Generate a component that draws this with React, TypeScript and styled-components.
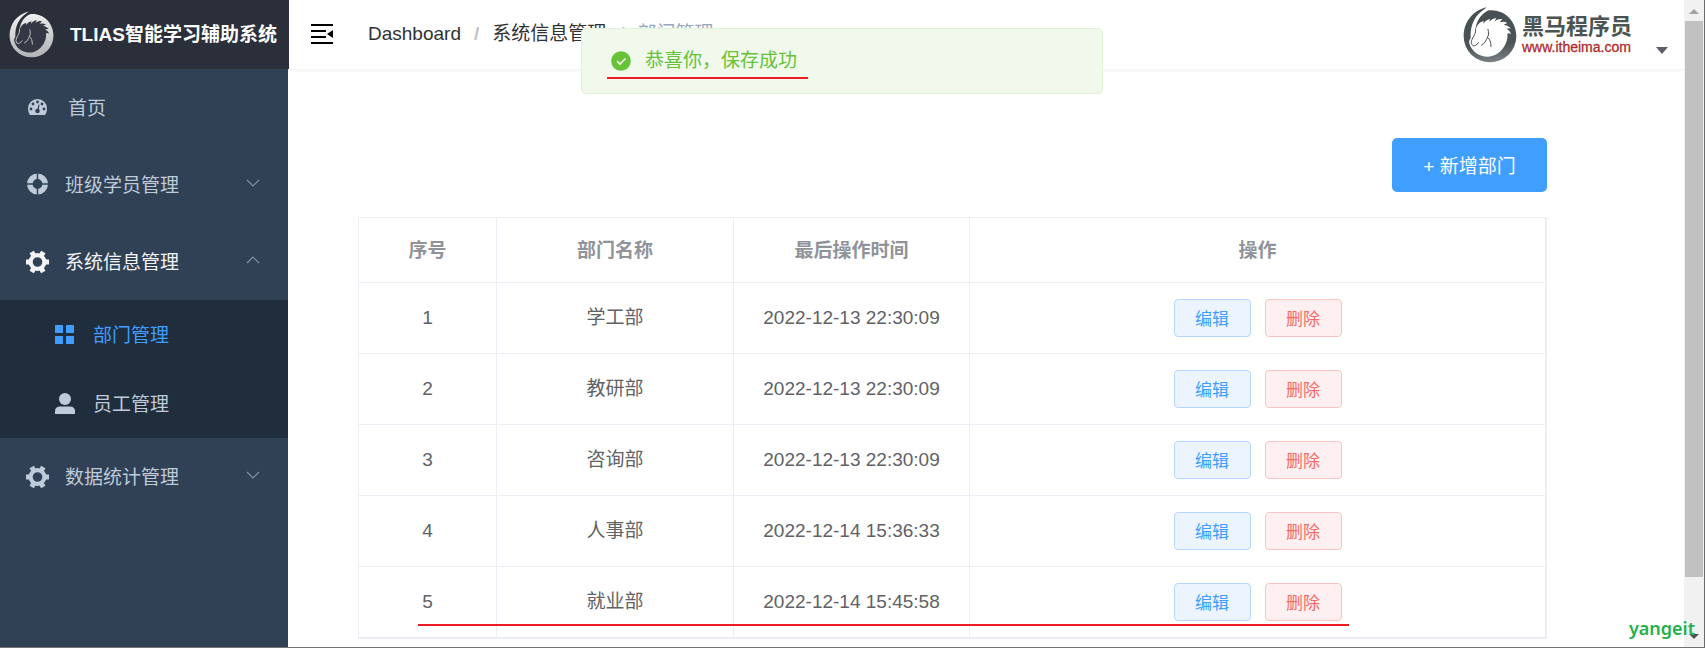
import React from "react";
import styled, { createGlobalStyle } from "styled-components";

const GlobalStyle = createGlobalStyle`
  * { box-sizing: border-box; }
  body {
    margin: 0;
    background: #fff;
    color: #303133;
    font-family: "Liberation Sans", "Noto Sans CJK SC", sans-serif;
    font-size: 19px;
    line-height: 24px;
  }
  a { color: inherit; text-decoration: none; }
  button { font-family: inherit; cursor: pointer; }
`;

const Window = styled.div`
  display: flex;
  min-height: 100vh;
  border-right: 1px solid #6b6b6b;
  border-bottom: 1px solid #737373;
`;

const Page = styled.div`
  position: relative;
  flex: 1;
  min-width: 0;
  display: flex;
  flex-direction: column;
`;

const Header = styled.header`
  display: flex;
  height: 69px;
`;

const Brand = styled.h1`
  display: flex;
  align-items: center;
  gap: 16px;
  width: 289px;
  margin: 0;
  padding-left: 9px;
  background: #2b2f3a;
  color: #fff;
  font-size: 19px;
  line-height: 24px;
  font-weight: 700;
  white-space: nowrap;
`;

const TopBar = styled.div`
  flex: 1;
  display: flex;
  align-items: center;
  padding: 0 16px 0 21px;
  box-shadow: 0 1px 4px rgba(0, 21, 41, 0.08);
  clip-path: inset(0 0 -8px 0);
`;

const IconButton = styled.button`
  display: flex;
  padding: 0 0 2px;
  border: 0;
  background: none;
`;

const Crumbs = styled.ol`
  display: flex;
  flex: 1;
  gap: 13px;
  margin: 0 0 2px 34px;
  padding: 0;
  list-style: none;
`;

const Crumb = styled.li<{ $current?: boolean }>`
  display: flex;
  gap: 13px;
  color: ${(p) => (p.$current ? "#97a8be" : "#303133")};
  white-space: nowrap;
`;

const Slash = styled.span`
  color: #c0c4cc;
  font-weight: 700;
`;

const Account = styled.button`
  display: flex;
  align-items: flex-end;
  gap: 24px;
  padding: 0;
  border: 0;
  background: none;
`;

const Company = styled.span`
  display: flex;
  align-items: center;
  gap: 5px;
`;

const CompanyText = styled.span`
  display: flex;
  flex-direction: column;
  text-align: left;
`;

const CompanyName = styled.span`
  color: #4b5452;
  font-size: 22px;
  line-height: 24px;
  font-weight: 700;
`;

const CompanySite = styled.span`
  color: #b02a2c;
  font-size: 14px;
  line-height: 16px;
  -webkit-text-stroke: 0.3px #b02a2c;
`;

const Caret = styled.span`
  margin-bottom: 9px;
  border: 6px solid transparent;
  border-top: 7px solid #5a5e66;
  border-bottom: 0;
`;

const Body = styled.div`
  flex: 1;
  display: flex;
`;

const Sidebar = styled.nav`
  width: 288px;
  background: #304156;
  color: #bfcbd9;
`;

const MenuList = styled.ul`
  margin: 0;
  padding: 0;
  list-style: none;
`;

const SubMenu = styled(MenuList)`
  background: #1f2d3d;
`;

const MenuLink = styled.a<{ $nested?: boolean; $wide?: boolean; $tone?: string }>`
  display: flex;
  align-items: center;
  gap: ${(p) => (p.$wide ? 19 : 16)}px;
  height: ${(p) => (p.$nested ? 69 : 77)}px;
  padding: 0 28px 0 ${(p) => (p.$nested ? 53 : 25)}px;
  color: ${(p) => p.$tone || "inherit"};
`;

const MenuText = styled.span`
  flex: 1;
  padding-top: 3px;
`;

const Main = styled.main`
  flex: 1;
  min-width: 0;
  padding: 69px 137px 8px 70px;
`;

const Actions = styled.div`
  display: flex;
  justify-content: flex-end;
  margin-bottom: 25px;
`;

const AddButton = styled.button`
  width: 155px;
  height: 54px;
  padding: 0 0 2px;
  border: 0;
  border-radius: 5px;
  background: #409eff;
  color: #fff;
  font-size: 19px;
`;

const TableFrame = styled.div`
  position: relative;
  border: 1px solid #ebeef5;
  border-width: 1px 2px 2px 1px;
`;

const Table = styled.table`
  width: 100%;
  table-layout: fixed;
  border-collapse: separate;
  border-spacing: 0;
  text-align: center;
`;

const Col = styled.col<{ $width?: string }>`
  width: ${(p) => p.$width || "auto"};
`;

const Th = styled.th`
  height: 65px;
  padding: 2px 0 0;
  border-bottom: 1px solid #ebeef5;
  color: #909399;
  font-weight: 700;
  & + & { border-left: 1px solid #ebeef5; }
`;

const Td = styled.td`
  height: 71px;
  padding: 0;
  border-bottom: 1px solid #ebeef5;
  color: #606266;
  & + & { border-left: 1px solid #ebeef5; }
  tr:last-child > & {
    height: 70px;
    border-bottom: 0;
  }
`;

const RowActions = styled.div`
  display: flex;
  justify-content: center;
  gap: 14px;
`;

const RowButton = styled.button<{ $danger?: boolean }>`
  width: 77px;
  height: 38px;
  padding: 0 0 2px;
  border: 1px solid ${(p) => (p.$danger ? "#fbc4c4" : "#b3d8ff")};
  border-radius: 4px;
  background: ${(p) => (p.$danger ? "#fef0f0" : "#ecf5ff")};
  color: ${(p) => (p.$danger ? "#f56c6c" : "#409eff")};
  font-size: 17px;
`;

const RowUnderline = styled.span`
  position: absolute;
  left: 59px;
  right: 196px;
  bottom: 11px;
  height: 2px;
  background: #ed1c24;
`;

const Toast = styled.div`
  position: absolute;
  top: 28px;
  left: 0;
  right: 0;
  z-index: 2;
  display: flex;
  align-items: center;
  gap: 13px;
  width: 522px;
  height: 66px;
  margin: 0 auto;
  padding: 0 28px;
  border: 1px solid #e1f3d8;
  border-radius: 5px;
  background: #f0f9eb;
  color: #67c23a;
`;

const ToastUnderline = styled.span`
  position: absolute;
  left: 25px;
  top: 48px;
  width: 201px;
  height: 2px;
  background: #ed1c24;
`;

const ScrollTrack = styled.div`
  display: flex;
  flex-direction: column;
  align-items: center;
  width: 20px;
  background: #f1f1f1;
`;

const ScrollThumb = styled.div`
  flex: 556;
  width: 18px;
  background: #c1c1c1;
`;

const ScrollRest = styled.div`
  flex: 49;
`;

const ScrollEnd = styled.div`
  display: flex;
  align-items: center;
  justify-content: center;
  height: 21px;
`;

const Watermark = styled.span`
  position: absolute;
  right: 10px;
  bottom: 8px;
  z-index: 3;
  color: #22b14c;
  font-family: "Noto Sans", sans-serif;
  font-size: 18px;
  line-height: 24px;
  font-weight: 600;
`;

const Root = styled.div`
  position: relative;
`;

function HorseLogo({ size, light }: { size: number; light?: boolean }) {
  const id = light ? "ring-light" : "ring-dark";
  const inner = light ? "#343844" : "#ffffff";
  const gap = light ? "#2b2f3a" : "#ffffff";
  return (
    <svg width={size} height={size + 2} viewBox="0 0 162 168" aria-hidden="true">
      <defs>
        <linearGradient id={id} x1="0.4" y1="0" x2="0.5" y2="1">
          <stop offset="0" stopColor={light ? "#f4f4f4" : "#465050"} />
          <stop offset="0.7" stopColor={light ? "#c4c5c6" : "#4c5557"} />
          <stop offset="1" stopColor={light ? "#b2b3b5" : "#7a8083"} />
        </linearGradient>
      </defs>
      <path
        fill={`url(#${id})`}
        d="M70 1C28 12 2 46 2 88a79 78 0 0 0 158 0C160 44 127 10 85 10c-8 0-18 2-25 5Z"
      />
      <path fill={gap} d="M70 3C43 18 25 44 23 78c-1 13 1 25 5 36l8-8c-2-24 0-49 11-69C53 26 62 18 74 11Z" />
      <path
        fill={inner}
        d="M38 68c4-15 13-23 24-26l-1 8c5-8 12-12 20-14l-2 9c6-8 13-11 21-12l-5 10c8-6 15-8 23-7l-8 10c9-3 16-2 23 2l-11 5c9 1 16 5 21 11l-13 1c7 4 12 9 14 16-7-3-8-3-11 0 4 28-22 68-59 68-29 0-51-19-56-44 2-13 15-23 20-37Z"
      />
      <g fill="none" stroke={light ? "#d8d9db" : "#4b5456"} strokeWidth="3" strokeLinecap="round">
        <path d="M38 68c2 15-13 25-13 38 0 8 6 13 13 9l9-8" />
        <path d="M75 67c3 11 2 18-2 25-4 8-8 19-17 22" />
        <path d="M73 91c8 4 11 15 11 28" />
      </g>
    </svg>
  );
}

function FoldIcon() {
  return (
    <svg width="24" height="20" viewBox="0 0 24 20" aria-hidden="true">
      <path d="M1 1h22M1 7h15M1 13h15M1 19h22" stroke="#000" strokeWidth="2" />
      <path d="M23 6v8l-6-4z" />
    </svg>
  );
}

function DashboardIcon() {
  return (
    <svg width="24" height="22" viewBox="0 0 24 22" aria-hidden="true">
      <path fill="#bfcbd9" d="M5 18c-1-1.500-2-4-2-6.500a9.500 9.500 0 0 1 19 0c0 2.500-1 5-2 6.500Z" />
      <g fill="#304156">
        <circle cx="12.500" cy="5" r="1.400" />
        <circle cx="8" cy="7" r="1.400" />
        <circle cx="17" cy="7" r="1.400" />
        <circle cx="6" cy="12" r="1.400" />
        <circle cx="19" cy="12" r="1.400" />
        <circle cx="12.500" cy="14" r="2.300" />
        <path d="m13.500 7.500 1 .3-1 6.200-1.500-.2Z" />
      </g>
    </svg>
  );
}

function HelpIcon() {
  return (
    <svg width="24" height="26" viewBox="0 0 24 26" aria-hidden="true">
      <circle cx="12.500" cy="12" r="7.700" fill="none" stroke="#bfcbd9" strokeWidth="5.600" />
      <path d="M12.500 0v24M0 12h24" stroke="#304156" strokeWidth="1.400" />
    </svg>
  );
}

function GearIcon() {
  return (
    <svg width="24" height="24" viewBox="0 0 24 24" aria-hidden="true">
      <g fill="none" stroke="currentColor">
        <circle cx="12.500" cy="12" r="6.900" strokeWidth="4.200" />
        <path
          strokeWidth="5"
          d="M1 12h4M20 12h4M6.700 2l2 3.500M18.300 2l-2 3.500M6.700 22l2-3.500M18.300 22l-2-3.500"
        />
      </g>
    </svg>
  );
}

function GridIcon() {
  return (
    <svg width="24" height="24" viewBox="0 0 24 24" fill="currentColor" aria-hidden="true">
      <rect x="2" y="2" width="8" height="8" rx="0.500" />
      <rect x="13" y="2" width="8" height="8" rx="0.500" />
      <rect x="2" y="13" width="8" height="8" rx="0.500" />
      <rect x="13" y="13" width="8" height="8" rx="0.500" />
    </svg>
  );
}

function UserIcon() {
  return (
    <svg width="24" height="24" viewBox="0 0 24 24" fill="currentColor" aria-hidden="true">
      <circle cx="12" cy="7" r="6" />
      <path d="M2 22v-3c0-3 2-4.500 5-4.500h10c3 0 5 1.500 5 4.500v3Z" />
    </svg>
  );
}

function Chevron({ up }: { up?: boolean }) {
  return (
    <svg width="14" height="14" viewBox="0 0 14 14" aria-hidden="true">
      <path d={up ? "M1 8l6-6 6 6" : "M1 2l6 6 6-6"} fill="none" stroke="#8790a0" strokeWidth="1.100" />
    </svg>
  );
}

function SuccessIcon() {
  return (
    <svg width="22" height="22" viewBox="0 0 22 22" aria-hidden="true">
      <circle cx="11" cy="11" r="9.800" fill="#67c23a" />
      <path d="m7 11.200 3 2.800 5.500-5.500" fill="none" stroke="#f0f9eb" strokeWidth="1.700" />
    </svg>
  );
}

const rows = [
  { id: 1, name: "学工部", time: "2022-12-13 22:30:09" },
  { id: 2, name: "教研部", time: "2022-12-13 22:30:09" },
  { id: 3, name: "咨询部", time: "2022-12-13 22:30:09" },
  { id: 4, name: "人事部", time: "2022-12-14 15:36:33" },
  { id: 5, name: "就业部", time: "2022-12-14 15:45:58" },
];

export default function App() {
  return (
    <Root>
      <GlobalStyle />
      <Window>
        <Page>
          <Header>
            <Brand>
              <HorseLogo size={45} light />
              TLIAS智能学习辅助系统
            </Brand>
            <TopBar>
              <IconButton type="button" aria-label="折叠菜单">
                <FoldIcon />
              </IconButton>
              <Crumbs>
                <Crumb>
                  <a href="#dashboard">Dashboard</a>
                  <Slash>/</Slash>
                </Crumb>
                <Crumb>
                  <a href="#system">系统信息管理</a>
                  <Slash>/</Slash>
                </Crumb>
                <Crumb $current>部门管理</Crumb>
              </Crumbs>
              <Account type="button">
                <Company>
                  <HorseLogo size={54} />
                  <CompanyText>
                    <CompanyName>黑马程序员</CompanyName>
                    <CompanySite>www.itheima.com</CompanySite>
                  </CompanyText>
                </Company>
                <Caret />
              </Account>
            </TopBar>
          </Header>
          <Body>
            <Sidebar>
              <MenuList>
                <li>
                  <MenuLink href="#home" $wide>
                    <DashboardIcon />
                    <MenuText>首页</MenuText>
                  </MenuLink>
                </li>
                <li>
                  <MenuLink href="#classes">
                    <HelpIcon />
                    <MenuText>班级学员管理</MenuText>
                    <Chevron />
                  </MenuLink>
                </li>
                <li>
                  <MenuLink href="#system" $tone="#f4f4f5">
                    <GearIcon />
                    <MenuText>系统信息管理</MenuText>
                    <Chevron up />
                  </MenuLink>
                  <SubMenu>
                    <li>
                      <MenuLink href="#departments" $nested $tone="#409eff">
                        <GridIcon />
                        <MenuText>部门管理</MenuText>
                      </MenuLink>
                    </li>
                    <li>
                      <MenuLink href="#employees" $nested>
                        <UserIcon />
                        <MenuText>员工管理</MenuText>
                      </MenuLink>
                    </li>
                  </SubMenu>
                </li>
                <li>
                  <MenuLink href="#statistics">
                    <GearIcon />
                    <MenuText>数据统计管理</MenuText>
                    <Chevron />
                  </MenuLink>
                </li>
              </MenuList>
            </Sidebar>
            <Main>
              <Actions>
                <AddButton type="button">+ 新增部门</AddButton>
              </Actions>
              <TableFrame>
                <Table>
                  <colgroup>
                    <Col $width="137px" />
                    <Col $width="237px" />
                    <Col $width="236px" />
                    <Col />
                  </colgroup>
                  <thead>
                    <tr>
                      <Th>序号</Th>
                      <Th>部门名称</Th>
                      <Th>最后操作时间</Th>
                      <Th>操作</Th>
                    </tr>
                  </thead>
                  <tbody>
                    {rows.map((row) => (
                      <tr key={row.id}>
                        <Td>{row.id}</Td>
                        <Td>{row.name}</Td>
                        <Td>{row.time}</Td>
                        <Td>
                          <RowActions>
                            <RowButton type="button">编辑</RowButton>
                            <RowButton type="button" $danger>
                              删除
                            </RowButton>
                          </RowActions>
                        </Td>
                      </tr>
                    ))}
                  </tbody>
                </Table>
                <RowUnderline />
              </TableFrame>
            </Main>
          </Body>
          <Toast role="status">
            <SuccessIcon />
            恭喜你，保存成功
            <ToastUnderline />
          </Toast>
        </Page>
        <ScrollTrack aria-hidden="true">
          <ScrollEnd>
            <svg width="10" height="6" viewBox="0 0 10 6">
              <path d="M0 6l5-5 5 5z" fill="#a3a3a3" />
            </svg>
          </ScrollEnd>
          <ScrollThumb />
          <ScrollRest />
          <ScrollEnd>
            <svg width="10" height="6" viewBox="0 0 10 6">
              <path d="M0 0l5 5 5-5z" fill="#505050" />
            </svg>
          </ScrollEnd>
        </ScrollTrack>
      </Window>
      <Watermark>yangeit</Watermark>
    </Root>
  );
}
